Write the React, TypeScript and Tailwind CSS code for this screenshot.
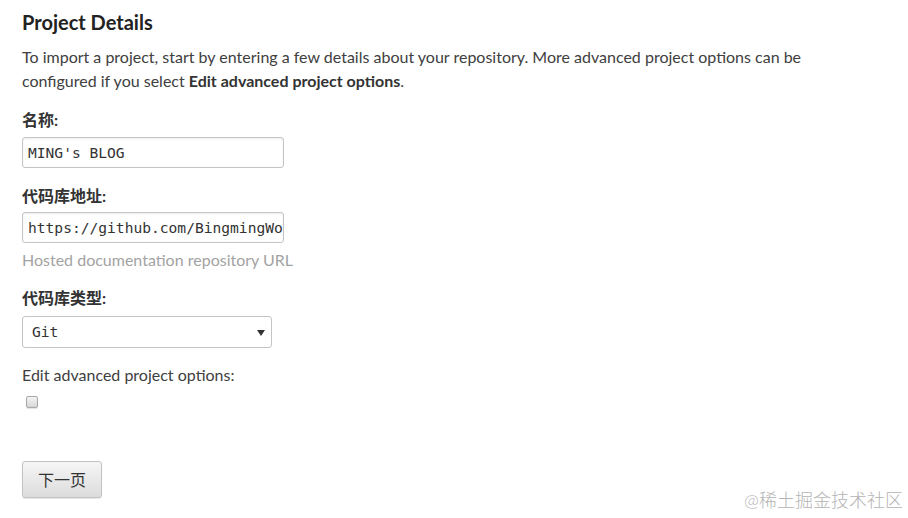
import React from "react"

const sans = "font-['Lato','Noto_Sans_CJK_SC',sans-serif]"
const mono = "font-['DejaVu_Sans_Mono','Liberation_Mono',monospace]"

function Label({ children }: { children: React.ReactNode }) {
  return <div className="text-[16px] leading-[24px] font-bold text-[#333]">{children}</div>
}

function TextInput({ value }: { value: string }) {
  return (
    <div className="w-[262px] h-[31px] border border-[#c4c4c4] rounded-[3px] bg-white shadow-[inset_0_1px_2px_rgba(0,0,0,0.08)] overflow-hidden flex items-center pl-[5px]">
      <span className={`${mono} text-[14.6px] text-[#333] whitespace-nowrap`}>{value}</span>
    </div>
  )
}

export default function App() {
  return (
    <div className={`${sans} relative w-[908px] h-[518px] bg-white text-[#404040] overflow-hidden`}>
      <div className="pl-[22px] pt-[10px] flex flex-col items-start">
        <h2 className="text-[20px] leading-[24px] font-bold text-[#222]">Project Details</h2>

        <p className="mt-[11px] w-[830px] text-[16px] leading-[24px]">
          To import a project, start by entering a few details about your repository. More advanced project options can be
          configured if you select <strong className="font-bold text-[#333]">Edit advanced project options</strong>.
        </p>

        {/* 名称 */}
        <div className="mt-[15px]">
          <Label>名称:</Label>
        </div>
        <div className="mt-[5px]">
          <TextInput value="MING's BLOG" />
        </div>

        {/* 代码库地址 */}
        <div className="mt-[16px]">
          <Label>代码库地址:</Label>
        </div>
        <div className="mt-[4px]">
          <TextInput value="https://github.com/BingmingWong/blog" />
        </div>
        <div className="mt-[5px] text-[16px] leading-[24px] text-[#a3a3a3]">Hosted documentation repository URL</div>

        {/* 代码库类型 */}
        <div className="mt-[14px]">
          <Label>代码库类型:</Label>
        </div>
        <div className="mt-[6px] w-[250px] h-[32px] border border-[#c4c4c4] rounded-[3px] bg-white flex items-center justify-between pl-[9px] pr-[6px]">
          <span className={`${mono} text-[14.6px] text-[#333]`}>Git</span>
          <svg width="8" height="6" viewBox="0 0 8 6" className="mt-[1px]">
            <path d="M0 0 H8 L4 6 Z" fill="#333" />
          </svg>
        </div>

        {/* advanced options */}
        <div className="mt-[15px] text-[16px] leading-[24px]">Edit advanced project options:</div>
        <div className="mt-[9px] ml-[4px] w-[12px] h-[12px] rounded-[2px] border border-[#a8a8a8] bg-gradient-to-b from-[#f4f4f4] to-[#d6d6d6] shadow-[0_1px_1px_rgba(0,0,0,0.12)]" />

        <button className="mt-[53px] w-[80px] h-[37px] rounded-[3px] border border-[#c2c2c2] bg-gradient-to-b from-[#f6f6f6] to-[#dcdcdc] shadow-[0_1px_1px_rgba(0,0,0,0.1)] text-[16px] text-[#333]">
          下一页
        </button>
      </div>

      <div className="absolute right-[5px] bottom-[6px] text-[18px] leading-[24px] text-[#b4b4b4] font-light">
        @稀土掘金技术社区
      </div>
    </div>
  )
}
